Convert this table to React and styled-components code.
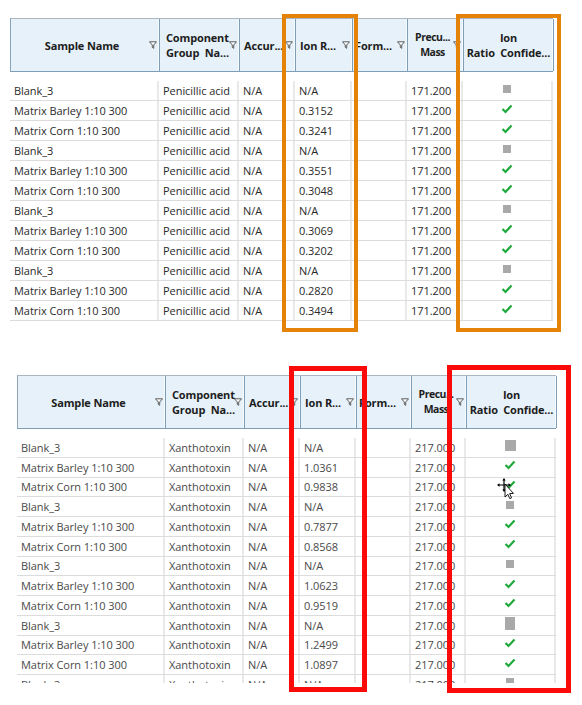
import React from 'react'
import styled, { createGlobalStyle } from 'styled-components'

const GlobalStyle = createGlobalStyle`
	html, body {
		margin: 0;
		padding: 0;
		background: #ffffff;
	}
	body {
		font-family: "Open Sans", "Noto Sans", "Liberation Sans", sans-serif;
		color: #222;
	}
`

const Page = styled.div`
	width: 582px;
	height: 705px;
	display: flex;
	flex-direction: column;
	overflow: hidden;
`

const Figure = styled.div`
	position: relative;
	margin-left: ${p => p.left}px;
	margin-top: ${p => p.top}px;
	width: ${p => p.width}px;
`

const Grid = styled.div`
	display: grid;
	grid-template-columns: ${p => p.cols};
`

const HeaderRow = styled(Grid)`
	height: 54px;
	background: #e6f1f9;
	border-top: 1px solid #aab7c2;
	border-bottom: 1px solid #7e9db6;
	border-left: 1px solid #8aa6bd;
	box-sizing: border-box;
`

const HeadCell = styled.div`
	display: flex;
	align-items: center;
	border-right: 1px solid #7e9db6;
	box-shadow: inset -1px 0 0 #f7fbfe;
	padding: 0 2px 0 ${p => p.pad ?? 4}px;
	overflow: hidden;
	min-width: 0;
`

const HeadLabel = styled.div`
	position: relative;
	z-index: 1;
	flex: 1;
	min-width: 0;
	margin-right: ${p => p.overlap || 0}px;
	font-size: ${p => p.size || 11}px;
	font-weight: 700;
	line-height: 15px;
	color: #1d1d1d;
	text-align: ${p => p.align || 'left'};
	white-space: nowrap;
	letter-spacing: ${p => p.tracking ?? -0.15}px;
`

const Gap = styled.div`
	height: ${p => p.h}px;
`

const Body = styled.div`
	height: ${p => p.h}px;
	overflow: hidden;
`

const Row = styled(Grid)`
	height: ${p => p.h}px;
	border-bottom: 1px solid #dcdcdc;
	box-sizing: border-box;
`

const Cell = styled.div`
	display: flex;
	align-items: center;
	justify-content: ${p => (p.center ? 'center' : 'flex-start')};
	padding-left: ${p => (p.center ? 0 : 4)}px;
	border-right: 2px solid #e9e9e9;
	font-size: 11px;
	color: ${p => p.tone};
	white-space: nowrap;
	overflow: hidden;
	min-width: 0;
	letter-spacing: -0.05px;
`

const Highlight = styled.div`
	position: absolute;
	left: ${p => p.x}px;
	top: ${p => p.y}px;
	width: ${p => p.w}px;
	height: ${p => p.h}px;
	border: ${p => p.stroke}px solid ${p => p.color};
	box-sizing: border-box;
	pointer-events: none;
	z-index: 2;
`

const Pointer = styled.svg`
	position: absolute;
	left: ${p => p.x}px;
	top: ${p => p.y}px;
	z-index: 3;
`

const Square = styled.span`
	display: block;
	width: ${p => p.w || 8}px;
	height: ${p => p.h || 8}px;
	background: #a9a9a9;
	margin-top: -4px;
`

const Filter = () => (
	<svg width="8" height="8" viewBox="0 0 8 8" style={{ flexShrink: 0 }}>
		<path d="M0.5 0.8 H7.5 L4.7 4 V7.3 L3.3 6.4 V4 Z" fill="#fff" stroke="#5a5a5a" strokeWidth="1" />
	</svg>
)

const Check = () => (
	<svg width="12" height="10" viewBox="0 0 12 10" style={{ marginTop: -4 }}>
		<polyline points="1.5,5 4.5,8 10.5,1.5" fill="none" stroke="#1fa83c" strokeWidth="2.2" />
	</svg>
)

const topCols = '149px 80px 56px 57px 55px 56px 90px'
const bottomCols = '148px 79px 56px 56px 55px 55px 90px'

const samples = ['Blank_3', 'Matrix Barley 1:10 300', 'Matrix Corn 1:10 300']

const topRatios = ['N/A', '0.3152', '0.3241', 'N/A', '0.3551', '0.3048', 'N/A', '0.3069', '0.3202', 'N/A', '0.2820', '0.3494']
const bottomRatios = ['N/A', '1.0361', '0.9838', 'N/A', '0.7877', '0.8568', 'N/A', '1.0623', '0.9519', 'N/A', '1.2499', '1.0897', 'N/A']
const squareSizes = [[11, 11], [8, 8], [8, 8], [10, 13], [8, 8]]

const Header = ({ cols }) => (
	<HeaderRow cols={cols}>
		<HeadCell pad={4}><HeadLabel align="center">Sample Name</HeadLabel><Filter /></HeadCell>
		<HeadCell pad={6}><HeadLabel>Component<br />Group&nbsp; Na...</HeadLabel><Filter /></HeadCell>
		<HeadCell><HeadLabel>Accur...</HeadLabel><Filter /></HeadCell>
		<HeadCell><HeadLabel>Ion R...</HeadLabel><Filter /></HeadCell>
		<HeadCell pad={2}><HeadLabel>Form...</HeadLabel><Filter /></HeadCell>
		<HeadCell pad={1}><HeadLabel align="center" overlap={-3} size={10.5} tracking={-0.5}>Precu...<br />Mass</HeadLabel><Filter /></HeadCell>
		<HeadCell pad={2}><HeadLabel align="center">Ion<br />Ratio&nbsp; Confide...</HeadLabel></HeadCell>
	</HeaderRow>
)

const Table = ({ cols, compound, mass, ratios, rowH, bodyH, tone, squares }) => (
	<>
		<Header cols={cols} />
		<Gap h={9} />
		<Body h={bodyH}>
			{ratios.map((r, i) => {
				const sq = squares ? squareSizes[Math.floor(i / 3) % squareSizes.length] : [8, 8]
				return (
					<Row key={i} cols={cols} h={rowH}>
						<Cell tone={tone}>{samples[i % 3]}</Cell>
						<Cell tone={tone}>{compound}</Cell>
						<Cell tone={tone}>N/A</Cell>
						<Cell tone={tone}>{r}</Cell>
						<Cell tone={tone}></Cell>
						<Cell tone={tone}>{mass}</Cell>
						<Cell tone={tone} center>{r === 'N/A' ? <Square w={sq[0]} h={sq[1]} /> : <Check />}</Cell>
					</Row>
				)
			})}
		</Body>
	</>
)

export default function App() {
	return (
		<Page>
			<GlobalStyle />
			<Figure left={10} top={18} width={543}>
				<Table cols={topCols} compound="Penicillic acid" mass="171.200" ratios={topRatios} rowH={20} bodyH={240} tone="#2a2a2a" />
				<Highlight x={272} y={-4} w={76} h={318} stroke={4} color="#e58208" />
				<Highlight x={446} y={-4} w={105} h={318} stroke={4} color="#e58208" />
			</Figure>
			<Figure left={17} top={54} width={539}>
				<Table cols={bottomCols} compound="Xanthotoxin" mass="217.000" ratios={bottomRatios} rowH={19.75} bodyH={245} tone="#4a4a4a" squares />
				<Highlight x={272} y={-9} w={78} h={326} stroke={5} color="#fb0a0a" />
				<Highlight x={430} y={-10} w={124} h={328} stroke={5} color="#fb0a0a" />
				<Pointer x={479} y={103} width="20" height="22" viewBox="0 0 20 22">
					<path d="M8 1 V13 M2 7 H14" stroke="#000" strokeWidth="1.2" />
					<path d="M8 0 L6.3 2.5 H9.7 Z M8 14 L6.3 11.5 H9.7 Z M1 7 L3.5 5.3 V8.7 Z M15 7 L12.5 5.3 V8.7 Z" fill="#000" />
					<path d="M9 6 V19 L11.8 16.3 L13.8 20.6 L15.6 19.8 L13.6 15.6 L17.4 15.4 Z" fill="#fff" stroke="#000" strokeWidth="0.9" />
				</Pointer>
			</Figure>
		</Page>
	)
}
